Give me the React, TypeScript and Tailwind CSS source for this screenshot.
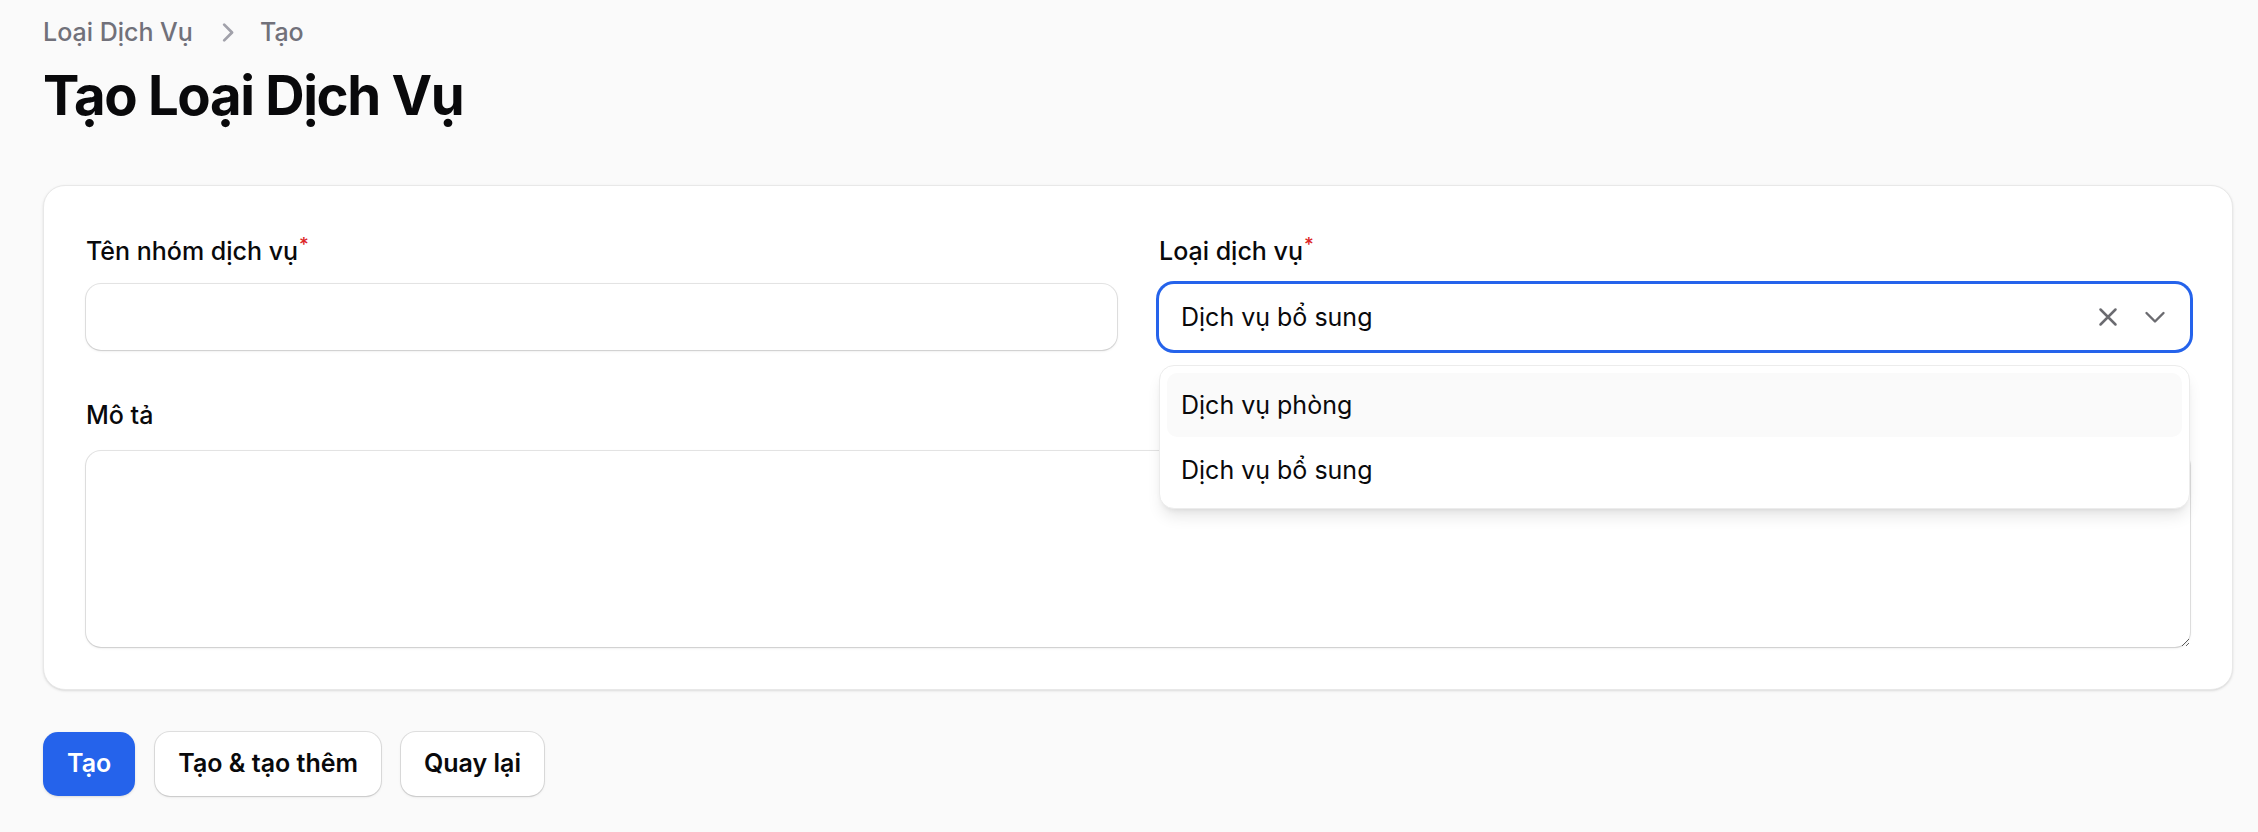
import React from "react";

function Label({ children, required }: { children: React.ReactNode; required?: boolean }) {
  return (
    <div className="relative top-[2px] h-[37px] text-[25px] leading-[37px] font-medium text-[#09090b]">
      {children}
      {required && <sup className="ml-[1px] text-[#dc2626] font-medium">*</sup>}
    </div>
  );
}

export default function App() {
  return (
    <div className="min-h-screen w-full bg-[#fafafa] pl-[43px] pr-[25px] pt-[14px] font-['Inter',sans-serif] text-[#09090b]">
      <nav className="flex h-[37px] items-center text-[25px] leading-[37px] font-medium text-[#71717a]">
        <span>Loại Dịch Vụ</span>
        <span className="mx-[15px] flex h-[37px] w-[37px] items-center justify-center">
          <svg width="37" height="37" viewBox="0 0 20 20" fill="#a1a1aa">
            <path d="M8.22 5.22a.75.75 0 0 1 1.06 0l4.25 4.25a.75.75 0 0 1 0 1.06l-4.25 4.25a.75.75 0 0 1-1.06-1.06L11.94 10 8.22 6.28a.75.75 0 0 1 0-1.06Z" />
          </svg>
        </span>
        <span>Tạo</span>
      </nav>

      <h1 className="mt-[11px] text-[54.5px] leading-[66px] font-bold tracking-tight text-[#09090b]">
        Tạo Loại Dịch Vụ
      </h1>

      <div className="mt-[57px] rounded-[22px] border border-[#e8e8e8] bg-white px-[42px] pt-[45px] pb-[42px] shadow-sm">
        <div className="grid grid-cols-2 gap-x-[42px]">
          <div className="flex flex-col">
            <Label required>Tên nhóm dịch vụ</Label>
            <div className="mt-[16px] h-[66px] rounded-[15px] bg-white ring-1 ring-[#0a0a0a]/10 shadow-sm" />
          </div>
          <div className="flex flex-col">
            <Label required>Loại dịch vụ</Label>
            <div className="relative mt-[16px]">
              <div className="flex h-[66px] items-center rounded-[15px] bg-white pl-[22px] pr-[24px] ring-[3px] ring-[#2563eb]">
                <span className="flex-1 text-[25px] leading-[37px] text-[#09090b]">Dịch vụ bổ sung</span>
                <svg width="20" height="20" viewBox="0 0 20 20" className="mr-[26px]" stroke="#6b6b70" strokeWidth="2.5" strokeLinecap="round" fill="none">
                  <path d="M2.5 2.5 L17.5 17.5 M17.5 2.5 L2.5 17.5" />
                </svg>
                <svg width="22" height="14" viewBox="0 0 22 14" stroke="#6b6b70" strokeWidth="2.4" strokeLinecap="round" strokeLinejoin="round" fill="none">
                  <path d="M2.5 3 L11 11.5 L19.5 3" />
                </svg>
              </div>
              <div className="absolute left-0 right-0 top-[calc(100%+15px)] z-10 rounded-[15px] border border-[#ececec] bg-white p-[7px] shadow-lg">
                <div className="flex h-[64px] items-center rounded-[10px] bg-[#fafafa] pl-[14px] pt-[2px] text-[25px] text-[#09090b]">
                  Dịch vụ phòng
                </div>
                <div className="flex h-[64px] items-center rounded-[10px] pl-[14px] pt-[3px] text-[25px] text-[#09090b]">
                  Dịch vụ bổ sung
                </div>
              </div>
            </div>
          </div>
          <div className="col-span-2 mt-[45px] flex flex-col">
            <Label>Mô tả</Label>
            <textarea className="mt-[19px] h-[196px] w-full resize-y rounded-[15px] bg-white ring-1 ring-[#0a0a0a]/10 shadow-sm outline-none" />
          </div>
        </div>
      </div>

      <div className="mt-[42px] flex gap-[20px]">
        <button className="h-[64px] rounded-[15px] bg-[#2563eb] px-[24px] text-[25px] font-semibold text-white shadow-sm">
          Tạo
        </button>
        <button className="h-[64px] rounded-[15px] bg-white px-[23px] text-[25px] font-semibold text-[#09090b] ring-1 ring-[#0a0a0a]/10 shadow-sm">
          Tạo &amp; tạo thêm
        </button>
        <button className="h-[64px] rounded-[15px] bg-white px-[23px] text-[25px] font-semibold text-[#09090b] ring-1 ring-[#0a0a0a]/10 shadow-sm">
          Quay lại
        </button>
      </div>
    </div>
  );
}
